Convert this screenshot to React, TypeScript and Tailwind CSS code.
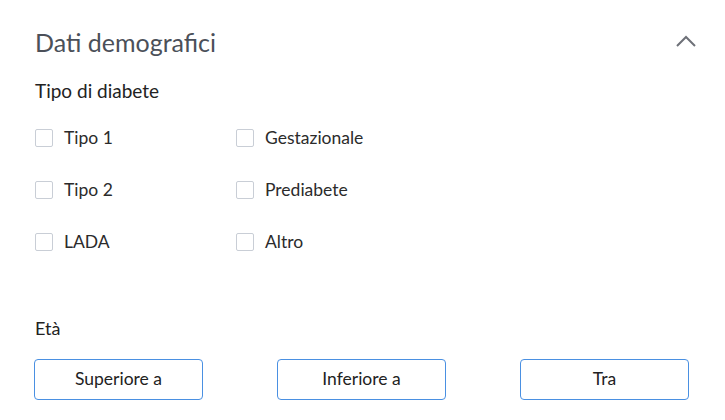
import React from 'react';

const options = [
  ['Tipo 1', 'Gestazionale'],
  ['Tipo 2', 'Prediabete'],
  ['LADA', 'Altro'],
];

function Checkbox({ label }: { label: string }) {
  return (
    <label className="flex items-center gap-[11px] h-[52px]">
      <span className="w-[18px] h-[18px] rounded-[2px] border border-[#c9ced6] bg-white" />
      <span className="text-[17.5px] text-[#2b2b2b]">{label}</span>
    </label>
  );
}

export default function App() {
  return (
    <div className="w-[725px] h-[420px] bg-white font-['Lato',sans-serif] pt-[26px] pl-[35px] pr-[28px]">
      <div className="flex items-center justify-between h-[32px]">
        <h2 className="text-[25px] leading-[32px] text-[#4b5059]">Dati demografici</h2>
        <svg width="22" height="14" viewBox="0 0 22 14" fill="none" className="mt-[-2px]">
          <path d="M2 12 L11 3 L20 12" stroke="#6e7178" strokeWidth="2" />
        </svg>
      </div>

      <div className="mt-[21px] text-[19px] leading-[24px] text-[#222]">Tipo di diabete</div>

      <div className="mt-[9px] grid grid-cols-[201px_1fr]">
        {options.map(([a, b]) => (
          <React.Fragment key={a}>
            <Checkbox label={a} />
            <Checkbox label={b} />
          </React.Fragment>
        ))}
      </div>

      <div className="mt-[48px] text-[18px] leading-[24px] text-[#222]">Età</div>

      <div className="mt-[19px] -ml-px w-[655px] grid grid-cols-3 gap-[74px]">
        {['Superiore a', 'Inferiore a', 'Tra'].map(t => (
          <button
            key={t}
            className="h-[41px] rounded-[4px] border border-[#4a90e2] bg-white text-[17.5px] text-[#222]"
          >
            {t}
          </button>
        ))}
      </div>
    </div>
  );
}
